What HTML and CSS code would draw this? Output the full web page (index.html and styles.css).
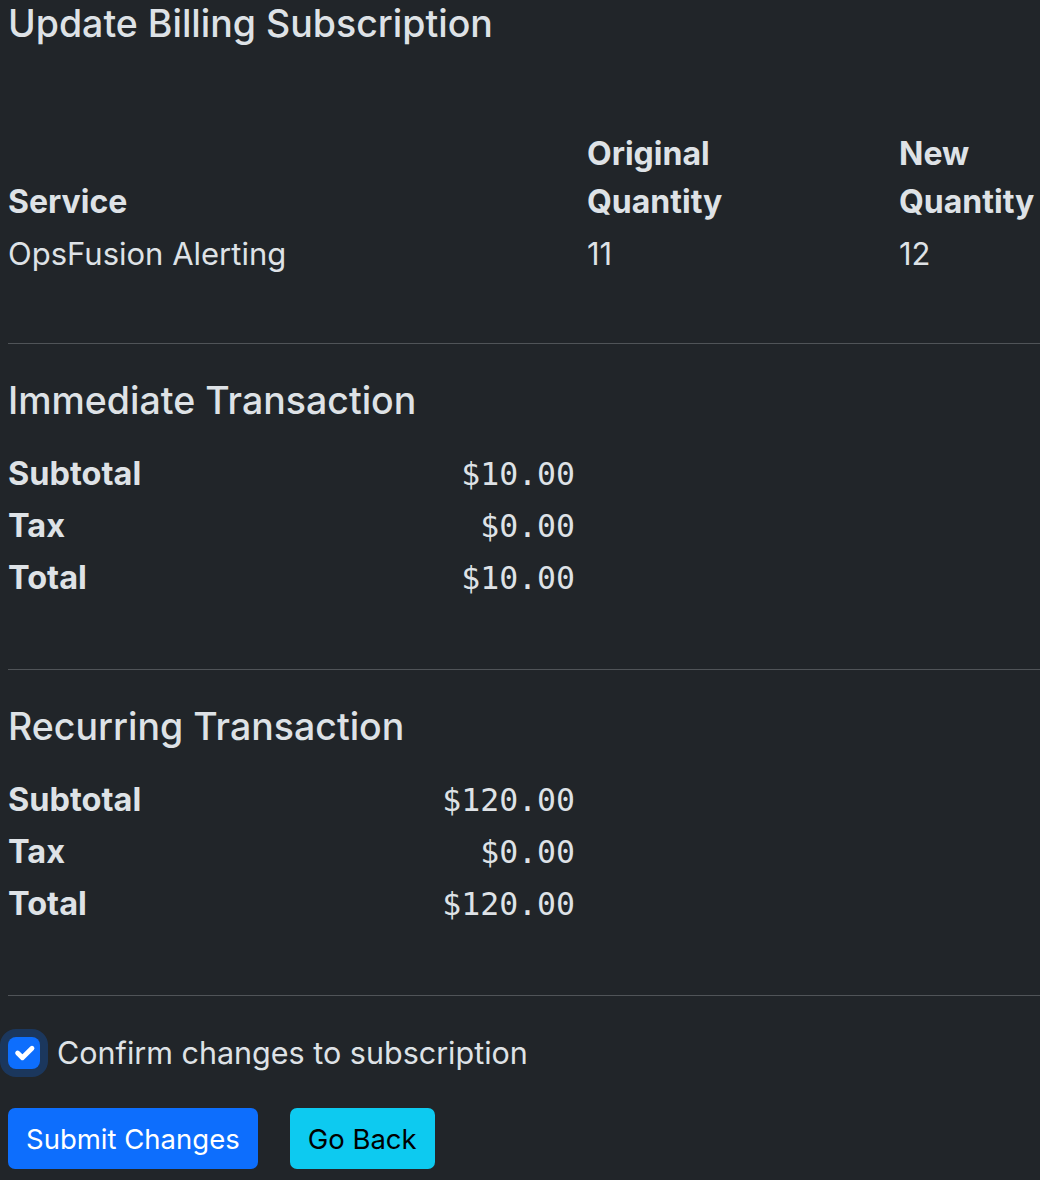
FILE: index.html
```html
<!DOCTYPE html>
<html lang="en">
<head>
    <meta charset="UTF-8">
    <title>Update Billing Subscription</title>
    <link rel="stylesheet" href="styles.css">
</head>
<body>
    <div class="page">
        <h1 class="title">Update Billing Subscription</h1>

        <table class="services">
            <thead>
                <tr>
                    <th class="col-service">Service</th>
                    <th class="col-orig">Original<br>Quantity</th>
                    <th class="col-new">New<br>Quantity</th>
                </tr>
            </thead>
            <tbody>
                <tr>
                    <td>OpsFusion Alerting</td>
                    <td>11</td>
                    <td>12</td>
                </tr>
            </tbody>
        </table>

        <hr class="divider">

        <section class="summary">
            <h3 class="summary-title">Immediate Transaction</h3>
            <div class="summary-grid">
                <div class="label">Subtotal</div>
                <div class="amount">$10.00</div>
                <div class="label">Tax</div>
                <div class="amount">$0.00</div>
                <div class="label">Total</div>
                <div class="amount">$10.00</div>
            </div>
        </section>

        <hr class="divider">

        <section class="summary">
            <h3 class="summary-title">Recurring Transaction</h3>
            <div class="summary-grid">
                <div class="label">Subtotal</div>
                <div class="amount">$120.00</div>
                <div class="label">Tax</div>
                <div class="amount">$0.00</div>
                <div class="label">Total</div>
                <div class="amount">$120.00</div>
            </div>
        </section>

        <hr class="divider">

        <label class="confirm">
            <span class="check">
                <svg viewBox="0 0 20 20" width="32" height="32"><path d="m6 10 3 3 6-6" fill="none" stroke="#fff" stroke-width="3" stroke-linecap="round" stroke-linejoin="round"/></svg>
            </span>
            <span class="confirm-text">Confirm changes to subscription</span>
        </label>

        <div class="actions">
            <button class="btn btn-primary">Submit Changes</button>
            <button class="btn btn-info">Go Back</button>
        </div>
    </div>
</body>
</html>
```

FILE: styles.css
```css
*{
    box-sizing: border-box;
}
body{
    margin: 0;
    background-color: #212529;
    color: #dee2e6;
    font-family: Inter, "Noto Sans", sans-serif;
    font-size: 31px;
    line-height: 48px;
}
.page{
    padding: 0 0 0 8px;
}
.title{
    margin: 0;
    font-size: 37.5px;
    font-weight: 500;
    line-height: 48px;
}
.services{
    width: 100%;
    margin-top: 82px;
    border-collapse: collapse;
}
.services th,
.services td{
    padding: 0;
    text-align: left;
    vertical-align: bottom;
}
.services th{
    font-size: 32px;
    font-weight: 700;
    padding-bottom: 4px;
}
.col-service{
    width: 579px;
}
.col-orig{
    width: 312px;
}
.divider{
    margin: 65px 0 0;
    border: 0;
    border-top: 1px solid #505458;
}
.summary-title{
    margin: 33px 0 0;
    font-size: 37.5px;
    font-weight: 500;
    line-height: 48px;
}
.summary-grid{
    display: grid;
    grid-template-columns: 200px 367px;
    margin-top: 23px;
    line-height: 52px;
}
.summary-grid .label{
    font-size: 32.5px;
    font-weight: 700;
}
.summary-grid .amount{
    text-align: right;
    font-family: "DejaVu Sans Mono", monospace;
    font-size: 31.5px;
}
.confirm{
    display: flex;
    align-items: center;
    gap: 17px;
    margin-top: 33px;
    font-size: 30.5px;
}
.check{
    width: 32px;
    height: 32px;
    border-radius: 8px;
    background-color: #0d6efd;
    box-shadow: 0 0 0 8px rgba(13, 110, 253, .25);
    display: flex;
}
.actions{
    display: flex;
    gap: 32px;
    margin-top: 31px;
}
.btn{
    height: 61px;
    padding: 0 18px;
    border: 0;
    border-radius: 7px;
    font-family: Inter, "Noto Sans", sans-serif;
    font-size: 27.5px;
}
.btn-primary{
    background-color: #0d6efd;
    color: #fff;
}
.btn-info{
    background-color: #0dcaf0;
    color: #000;
}
```
